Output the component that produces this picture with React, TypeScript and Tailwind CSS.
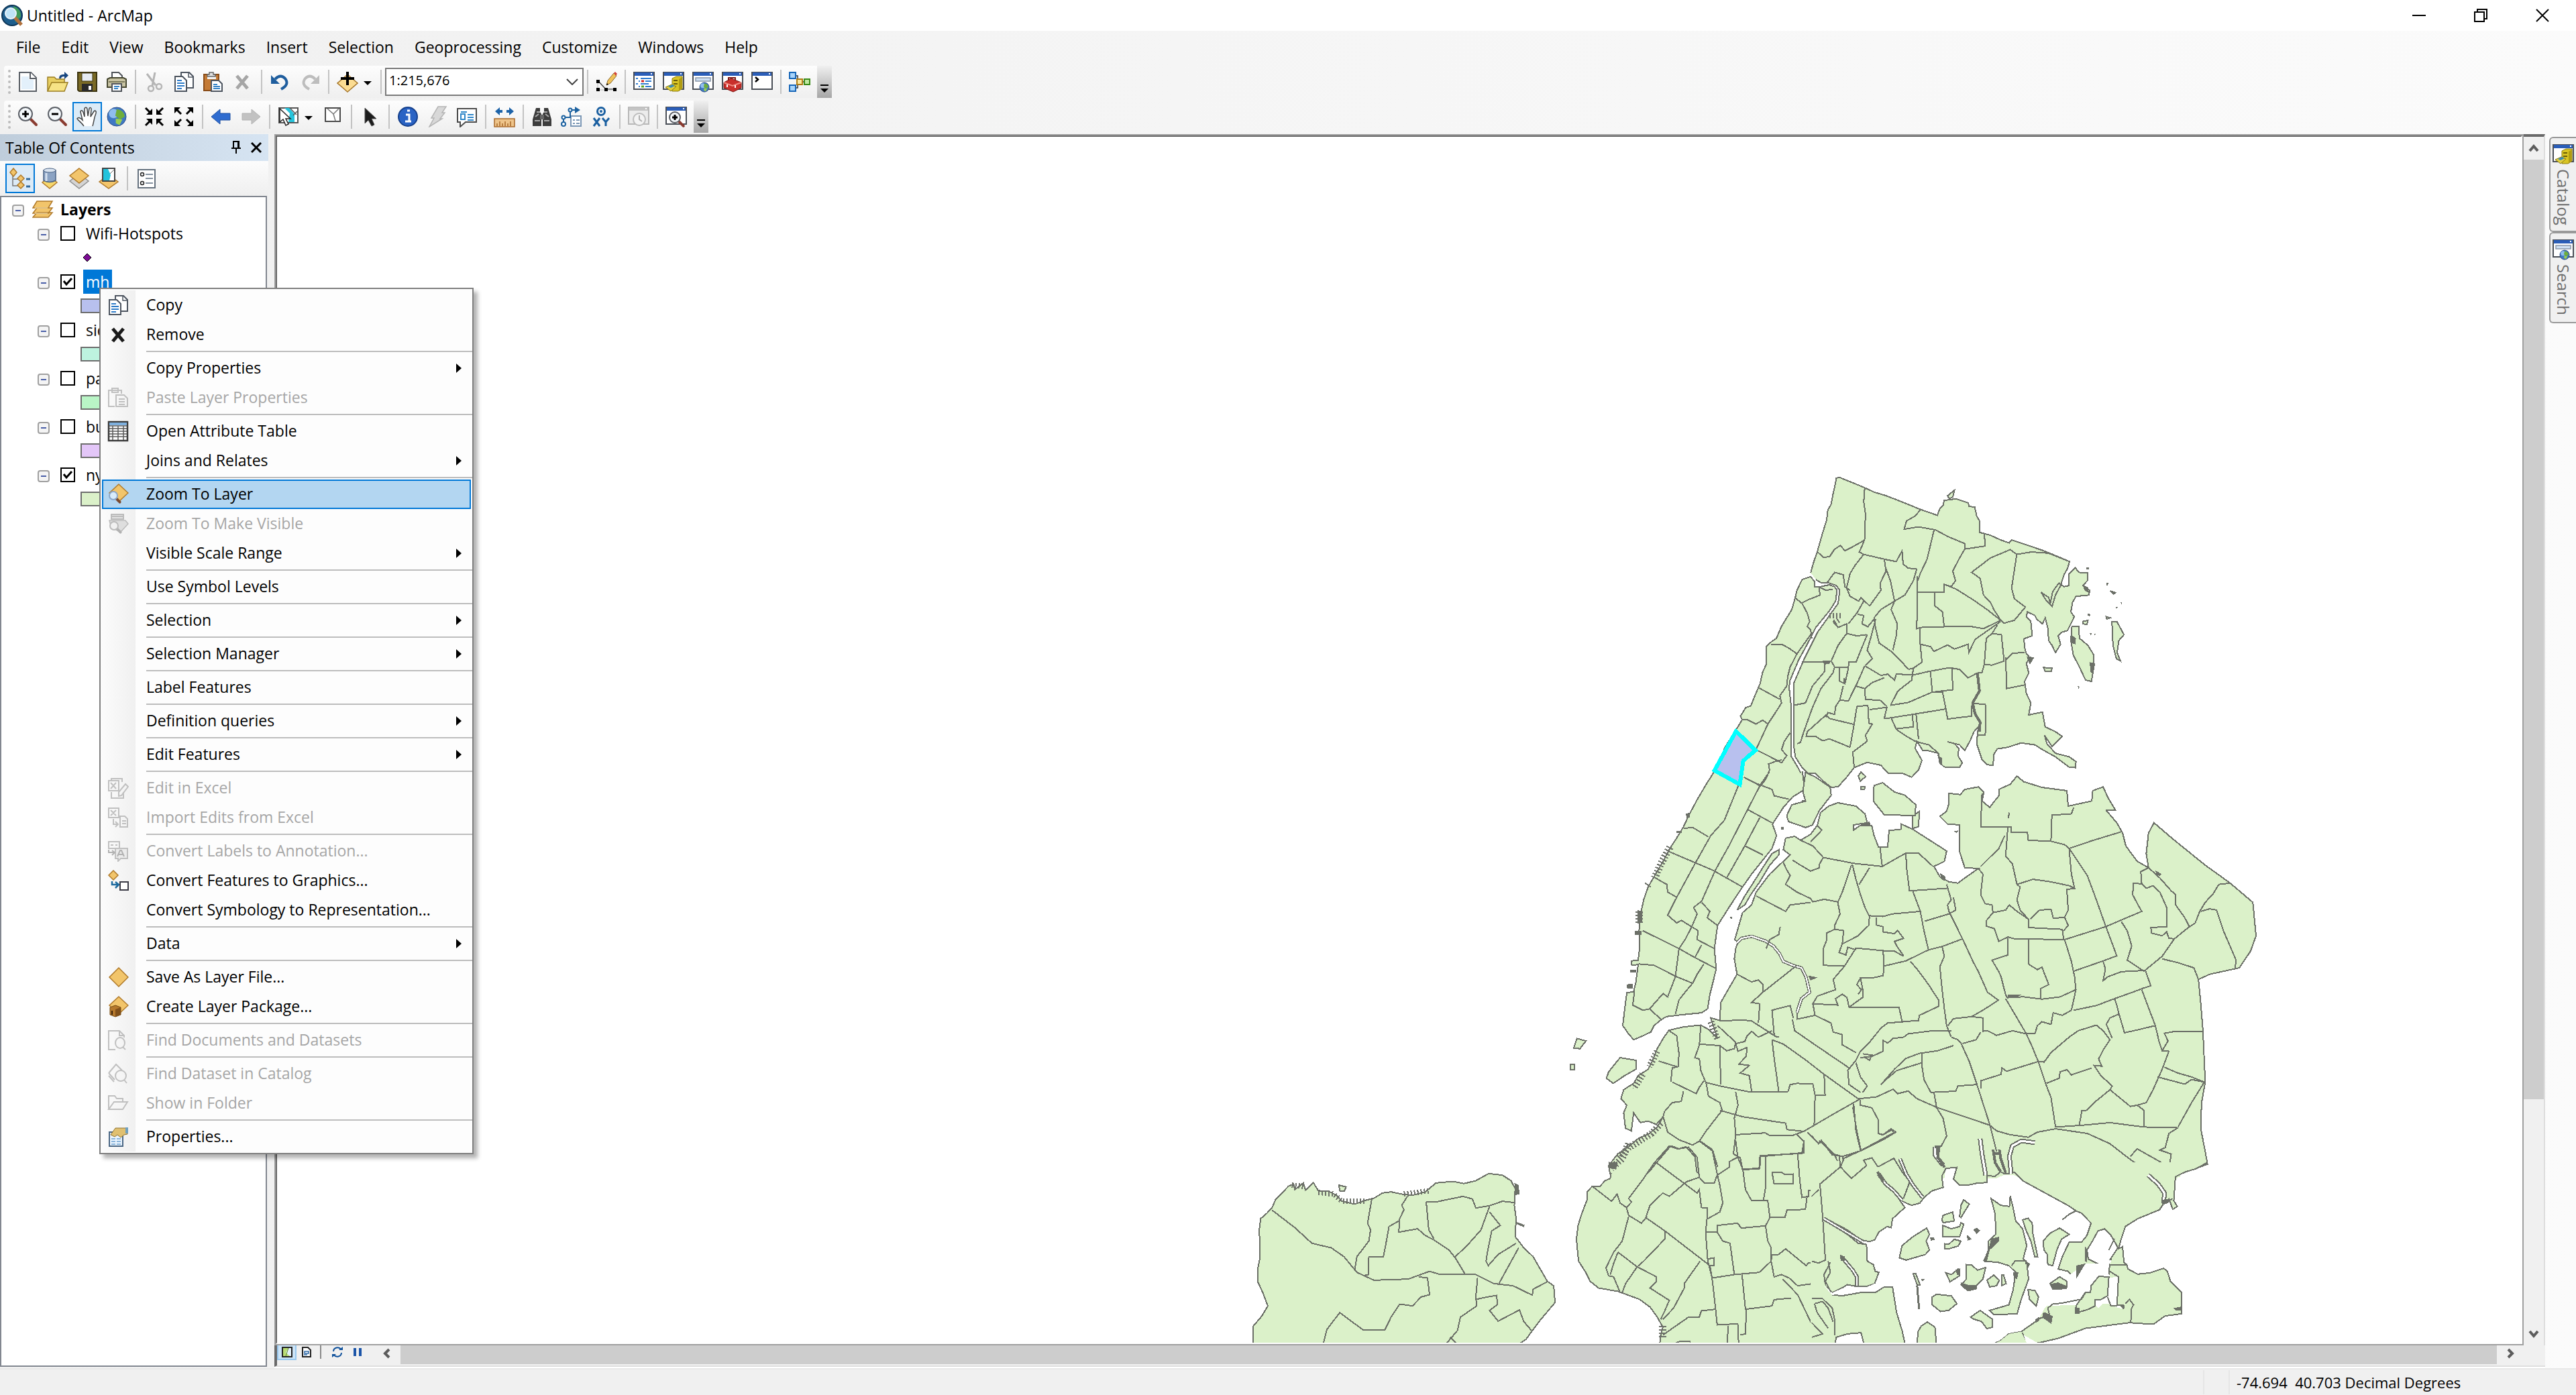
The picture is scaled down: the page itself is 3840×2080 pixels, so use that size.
import React from "react";

/* ------------------------------------------------------------------ */
/* Icon building blocks, all on a 32 x 32 grid                          */
/* ------------------------------------------------------------------ */

type Kids = { children?: React.ReactNode };

function Icon({ children, className = "size-8" }: Kids & { className?: string }) {
  return (
    <svg viewBox="0 0 32 32" className={`${className} shrink-0`} fill="none" aria-hidden="true">
      {children}
    </svg>
  );
}

const GOLD = "#f2c56b";
const GOLD_EDGE = "#b07a2a";

function Win({ children, gray = false }: Kids & { gray?: boolean }) {
  return (
    <>
      <rect x="1" y="2" width="30" height="25" fill={gray ? "#ececec" : "#fff"} stroke={gray ? "#b8b8b8" : "#4a4f57"} strokeWidth="2" />
      <rect x="2" y="2" width="28" height="5" fill={gray ? "#c4c4c4" : "#2a5db8"} />
      <rect x="26" y="3" width="2" height="2" fill="#fff" />
      {children}
    </>
  );
}

function Lens({ x, y, r, sign = "", handle = "#8a3b30", edge = "#5b5f66", glass = "#f4f8fb" }: { x: number; y: number; r: number; sign?: string; handle?: string; edge?: string; glass?: string }) {
  return (
    <>
      <path d={`M${x + r * 0.75},${y + r * 0.75} L${x + r * 1.6},${y + r * 1.6}`} stroke={handle} strokeWidth="4" strokeLinecap="round" />
      <circle cx={x} cy={y} r={r} fill={glass} stroke={edge} strokeWidth="2" />
      {sign !== "" && <path d={`M${x - r / 2},${y} H${x + r / 2}`} stroke="#000" strokeWidth="3" />}
      {sign === "+" && <path d={`M${x},${y - r / 2} V${y + r / 2}`} stroke="#000" strokeWidth="3" />}
    </>
  );
}

function Globe({ x, y, r }: { x: number; y: number; r: number }) {
  return (
    <>
      <circle cx={x} cy={y} r={r} fill="#3f78c4" stroke="#2b4f86" strokeWidth="1" />
      <circle cx={x - r / 3} cy={y - r / 3} r={r / 2} fill="#8fbdf0" />
      <path d={`M${x},${y - r * 0.8} q${r * 0.8},${r * 0.1} ${r * 0.85},${r * 0.8} l-${r * 0.5},${r * 0.3} l-${r * 0.5},-${r * 0.4} z`} fill="#6fae3c" />
      <path d={`M${x - r * 0.1},${y + r * 0.2} l${r * 0.7},${r * 0.1} l-${r * 0.3},${r * 0.6} l-${r * 0.4},-${r * 0.2} z`} fill="#9ccf52" />
    </>
  );
}

function Diamond({ x, y, w, h, fill = GOLD, edge = GOLD_EDGE }: { x: number; y: number; w: number; h: number; fill?: string; edge?: string }) {
  return <path d={`M${x},${y - h} L${x + w},${y} L${x},${y + h} L${x - w},${y} Z`} fill={fill} stroke={edge} strokeWidth="1.5" />;
}

function Pages({ line = "#2f7cc8", edge = "#4d5560" }: { line?: string; edge?: string }) {
  return (
    <>
      <path d="M12,2 h12 l6,6 v17 h-18 z" fill="#fff" stroke={edge} strokeWidth="2" />
      <path d="M23,2 v7 h7" stroke={edge} strokeWidth="1.5" />
      <path d="M3,8 h11 l6,6 v16 h-17 z" fill="#fff" stroke={edge} strokeWidth="2" />
      <path d="M6,14 h7 M6,18 h11 M6,22 h11 M6,26 h7" stroke={line} strokeWidth="2" />
    </>
  );
}

function Cabinet() {
  return (
    <>
      <path d="M14,11 l6,-3 h9 v18 l-6,4 h-9 z" fill="#d9c524" stroke="#8a7a10" strokeWidth="1" />
      <path d="M24,12 l5,-3 v17 l-5,4 z" fill="#b09c12" />
      <path d="M16,14 h6 M16,19 h6" stroke="#6b5d08" strokeWidth="2" />
      <path d="M4,24 l9,-4 l7,3 l-8,7 z" fill="#e2d040" stroke="#8a7a10" strokeWidth="1" />
      <path d="M8,23 l6,-3 l4,2 l-6,3 z" fill="#3a8bb8" />
    </>
  );
}

const icons: Record<string, React.ReactNode> = {
  new: (
    <>
      <path d="M3,2 h17 l8,8 v20 h-25 z" fill="#fff" stroke="#5a5f66" strokeWidth="2" />
      <path d="M6,8 h11 v5 h7 v14 h-18 z" fill="#e3f0fb" />
      <path d="M19,2 v9 h9" stroke="#5a5f66" strokeWidth="2" fill="#fff" />
    </>
  ),
  open: (
    <>
      <path d="M1,30 V9 h10 l3,3 h12 v7" fill="#e8cf62" stroke="#9a7d20" strokeWidth="1.5" />
      <path d="M1,30 l6,-13 h24 l-5,13 z" fill="#f6e385" stroke="#9a7d20" strokeWidth="1.5" />
      <path d="M18,11 q0,-6 6,-6 h2 v-4 l6,5.5 l-6,5.5 v-4 q-5,0 -5,3z" fill="#17457f" />
    </>
  ),
  save: (
    <>
      <path d="M2,2 h28 v28 h-26 l-2,-2 z" fill="#7a6a25" stroke="#3c3410" strokeWidth="2" />
      <rect x="8" y="3" width="16" height="12" fill="#e6ebf2" stroke="#3c3410" />
      <rect x="8" y="19" width="16" height="11" fill="#2a2a2a" />
      <rect x="18" y="22" width="4" height="6" fill="#fff" />
    </>
  ),
  print: (
    <>
      <path d="M9,13 V2 h10 l5,5 v6" fill="#fff" stroke="#50545a" strokeWidth="2" />
      <path d="M2,12 l4,-2 h20 l4,2 v12 h-28 z" fill="#c9c4a4" stroke="#45462f" strokeWidth="2" />
      <path d="M4,16 h24" stroke="#7c7b5c" strokeWidth="2" />
      <path d="M9,19 h14 v11 h-14 z" fill="#fff" stroke="#50545a" strokeWidth="2" />
      <path d="M12,23 h8 M12,26 h6" stroke="#3a86c8" strokeWidth="2" />
    </>
  ),
  cut: (
    <>
      <path d="M5,4 L18,21 M17,2 L13,22" stroke="#b5b5b5" strokeWidth="3" />
      <circle cx="11" cy="26" r="4" stroke="#b5b5b5" strokeWidth="2.5" />
      <circle cx="23" cy="23" r="4" stroke="#b5b5b5" strokeWidth="2.5" />
    </>
  ),
  copy: <Pages />,
  paste: (
    <>
      <rect x="2" y="5" width="22" height="24" fill="#c47a35" stroke="#8a4c18" strokeWidth="2" />
      <rect x="7" y="8" width="13" height="4" fill="#f4f4f4" />
      <path d="M7,8 v-3 h3 v-3 h6 v3 h3 v3 z" fill="#e2e2e2" stroke="#666" strokeWidth="1.5" />
      <path d="M13,14 h11 l5,5 v11 h-16 z" fill="#fff" stroke="#4d5560" strokeWidth="2" />
      <path d="M16,20 h6 M16,23 h10 M16,26 h10" stroke="#3a86c8" strokeWidth="2" />
    </>
  ),
  delete: <path d="M7,7 L23,26 M23,7 L7,26" stroke="#a6a6a6" strokeWidth="5" />,
  undo: (
    <>
      <path d="M8,12 q8,-8 15,-1 q7,9 -6,16" stroke="#1f5e9e" strokeWidth="4" />
      <path d="M2,6 v13 h13 z" fill="#1f5e9e" />
    </>
  ),
  redo: (
    <>
      <path d="M24,12 q-8,-8 -15,-1 q-7,9 6,16" stroke="#bdbdbd" strokeWidth="4" />
      <path d="M30,6 v13 h-13 z" fill="#bdbdbd" />
    </>
  ),
  add: (
    <>
      <Diamond x={16} y={18} w={15} h={13} fill="#fbdc92" edge="#a87a30" />
      <path d="M16,1 V21 M6,11 H26" stroke="#000" strokeWidth="4" />
    </>
  ),
  editor: (
    <>
      <path d="M3,14 L15,27 H29" stroke="#444" strokeWidth="1.5" />
      <path d="M3,15 V28 M3,28 H29" stroke="#bbb" />
      <path d="M1,13 h5 v5 h-5z M1,25 h5 v5 h-5z M13,25 h5 v5 h-5z M26,25 h5 v5 h-5z" fill="#000" />
      <path d="M16,21 l2,-7 l9,-11 l4,4 l-9,11 z" fill="#f0c25a" stroke="#8a6a30" strokeWidth="1" />
      <path d="M27,3 l2,-2 l3,3 l-2,3z" fill="#d2453a" />
      <path d="M16,21 l1,-3 l2,2z" fill="#000" />
    </>
  ),
  toc: (
    <Win>
      <path d="M4,11 h3 M11,11 h16 M8,15 h2 M18,15 h9 M4,19 h3 M11,19 h12 M8,23 h2 M18,23 h9" stroke="#2f7cd0" strokeWidth="2" />
      <path d="M12,15 h4" stroke="#d02020" strokeWidth="3" />
      <path d="M12,23 h4" stroke="#58a520" strokeWidth="3" />
    </Win>
  ),
  catalog: (
    <Win>
      <Cabinet />
    </Win>
  ),
  search: (
    <Win>
      <rect x="5" y="10" width="22" height="5" fill="#cfe0f4" stroke="#8a97a8" strokeWidth="1.5" />
      <Globe x={18} y={24} r={7} />
    </Win>
  ),
  toolbox: (
    <Win>
      <path d="M3,17 l11,-6 l15,6 v8 l-12,6 l-14,-6 z" fill="#c9302c" stroke="#7e1815" strokeWidth="1" />
      <path d="M3,17 l13,5 l13,-5" stroke="#f08a80" strokeWidth="2" />
      <path d="M10,14 v-4 h10 v4" stroke="#7e1815" strokeWidth="2" />
      <path d="M8,20 v4 M20,21 v4" stroke="#fff" strokeWidth="2" />
    </Win>
  ),
  python: (
    <Win>
      <path d="M6,9 L10,12.5 L6,16" stroke="#000" strokeWidth="2.5" />
    </Win>
  ),
  model: (
    <>
      <path d="M6,7 H13 V25 H6 M13,16 H28" stroke="#333" strokeWidth="1.5" />
      <rect x="1" y="2" width="9" height="9" fill="#a9d4fa" stroke="#1766b8" strokeWidth="2" />
      <rect x="1" y="21" width="9" height="9" fill="#a9d4fa" stroke="#1766b8" strokeWidth="2" />
      <rect x="12" y="12" width="8" height="8" fill="#fbe7a0" stroke="#b07d14" strokeWidth="2" />
      <rect x="23" y="12" width="8" height="8" fill="#bfe8a2" stroke="#3a8a18" strokeWidth="2" />
    </>
  ),
  zoomIn: <Lens x={12} y={12} r={10} sign="+" />,
  zoomOut: <Lens x={12} y={12} r={10} sign="-" />,
  pan: (
    <path
      d="M11,30 C8,25 4,23 1,19 C3,16 6,18 9,21 L6,9 C6,6 9,6 10,9 L12,16 L12,4 C13,1 16,2 16,5 L17,15 L19,4 C20,1 23,3 22,6 L21,16 L26,8 C28,6 30,8 29,11 C26,18 26,24 24,30"
      fill="#fff"
      stroke="#444"
      strokeWidth="1.5"
    />
  ),
  globe: <Globe x={16} y={16} r={14} />,
  fixedIn: (
    <>
      <path d="M3,3 L10,10 M29,3 L22,10 M3,29 L10,22 M29,29 L22,22" stroke="#000" strokeWidth="3" />
      <path d="M13,4 v9 h-9z M19,4 v9 h9z M13,28 v-9 h-9z M19,28 v-9 h9z" fill="#000" />
    </>
  ),
  fixedOut: (
    <>
      <path d="M6,6 L12,12 M26,6 L20,12 M6,26 L12,20 M26,26 L20,20" stroke="#000" strokeWidth="3" />
      <path d="M2,2 h9 l-9,9z M30,2 h-9 l9,9z M2,30 h9 l-9,-9z M30,30 h-9 l9,-9z" fill="#000" />
    </>
  ),
  back: <path d="M1,16 L14,5 V11 H29 V21 H14 V27 Z" fill="#2f6cd0" stroke="#1d4fa0" />,
  forward: <path d="M30,16 L17,5 V11 H3 V21 H17 V27 Z" fill="#c2c2c2" stroke="#b2b2b2" />,
  select: (
    <>
      <rect x="2" y="3" width="28" height="22" fill="#fff" stroke="#555" strokeWidth="2" />
      <path d="M10,3 l8,8 l-2,13 h9 v-12 l-8,-9 z" fill="#27c4dc" />
      <path d="M19,4 l9,9 M29,8 l-6,6" stroke="#555" strokeWidth="1.5" />
      <path d="M3,4 l0,20 l5,-4 l4,9 l4,-2 l-4,-8 h7 z" fill="#fff" stroke="#222" strokeWidth="1.5" />
    </>
  ),
  clear: (
    <>
      <rect x="5" y="3" width="22" height="20" fill="#fff" stroke="#4a4a4a" strokeWidth="2" />
      <path d="M8,4 L17,12 L20,22 M25,4 L19,10 L17,12" stroke="#777" strokeWidth="1.5" />
    </>
  ),
  arrow: <path d="M8,3 V26 L13,21 L18,30 L22,28 L18,19 H25 Z" fill="#1c1c1c" stroke="#555" />,
  info: (
    <>
      <circle cx="16" cy="16" r="14" fill="#2a63c4" stroke="#16408c" strokeWidth="2" />
      <path d="M13,13 h5 v10 h3 M12,23 h9 M15,7 h4" stroke="#fff" strokeWidth="3" />
    </>
  ),
  bolt: <path d="M17,1 h12 l-6,9 h4 l-7,9 h3 L4,31 l7,-13 h-4 z" fill="#d8d8d8" stroke="#b4b4b4" strokeWidth="1.5" />,
  popup: (
    <>
      <path d="M2,4 h28 v20 h-16 l-8,7 v-7 h-4 z" fill="#fff" stroke="#4d4d4d" strokeWidth="2" />
      <path d="M7,9 h9 M17,13 h9 M17,17 h9 M17,21 h9" stroke="#2f86c8" strokeWidth="2" />
      <rect x="7" y="12" width="6" height="8" stroke="#2f86c8" strokeWidth="2" />
    </>
  ),
  measure: (
    <>
      <path d="M2,8 L9,2 V6 H13 V10 H9 V14 Z M30,8 L23,2 V6 H19 V10 H23 V14 Z" fill="#1c62a8" />
      <rect x="1" y="19" width="30" height="12" fill="#eec48a" stroke="#a8682a" strokeWidth="1.5" />
      <path d="M5,30 v-4 M9,30 v-7 M13,30 v-4 M17,30 v-7 M21,30 v-4 M25,30 v-7" stroke="#a8682a" strokeWidth="1.5" />
    </>
  ),
  find: (
    <>
      <path d="M7,3 h6 v6 l2,3 v18 h-13 v-10 z" fill="#3c3c3c" />
      <path d="M25,3 h-6 v6 l-2,3 v18 h13 v-10 z" fill="#3c3c3c" />
      <path d="M5,22 h8 M19,22 h8 M8,9 h5 M19,9 h5 M6,16 l5,-4 M26,16 l-5,-4" stroke="#a8a8a8" strokeWidth="2" />
      <rect x="13" y="13" width="6" height="7" fill="#666" />
    </>
  ),
  route: (
    <>
      <rect x="15" y="15" width="15" height="15" fill="#fff" stroke="#7b97b5" strokeWidth="2" />
      <path d="M18,21 h3 M23,21 h5 M18,26 h3 M23,26 h5" stroke="#7b97b5" strokeWidth="2" />
      <path d="M4,27 V17 H14 V6 H22" stroke="#1d62a0" strokeWidth="2" />
      <path d="M21,1 L29,6 L21,11 Z" fill="#1d62a0" />
      <circle cx="4" cy="27" r="3" fill="#fff" stroke="#1d62a0" strokeWidth="2" />
      <circle cx="4" cy="17" r="2.5" fill="#fff" stroke="#1d62a0" strokeWidth="2" />
      <circle cx="14" cy="6" r="2.5" fill="#fff" stroke="#1d62a0" strokeWidth="2" />
    </>
  ),
  xy: (
    <>
      <circle cx="16" cy="8" r="5.5" stroke="#1a5fa0" strokeWidth="3" />
      <circle cx="16" cy="8" r="2" fill="#1a5fa0" />
      <path d="M5,18 L14,30 M14,18 L5,30 M18,18 L23,24 L28,18 M23,24 V30" stroke="#1a5fa0" strokeWidth="3" />
    </>
  ),
  time: (
    <Win gray>
      <circle cx="17" cy="20" r="9" fill="#f4f4f4" stroke="#bcbcbc" strokeWidth="2" />
      <path d="M17,14 V20 L21,23" stroke="#b0b0b0" strokeWidth="2" />
    </Win>
  ),
  viewer: (
    <Win>
      <Lens x={14} y={17} r={8} sign="+" />
    </Win>
  ),
  byDrawing: (
    <>
      <path d="M5,12 V27 H15 M5,17 H15" stroke="#777" strokeWidth="1.5" />
      <Diamond x={6} y={7} w={5} h={6} />
      <Diamond x={17} y={16} w={5} h={5} />
      <Diamond x={17} y={26} w={5} h={5} />
      <path d="M25,17 h6 M25,28 h6" stroke="#2f6a9e" strokeWidth="3" />
    </>
  ),
  bySource: (
    <>
      <Diamond x={16} y={22} w={11} h={9} fill="#f6d76c" />
      <path d="M7,4 q9,-5 18,0 v15 q-9,5 -18,0 z" fill="#8ba3c4" stroke="#4b6384" strokeWidth="1.5" />
      <ellipse cx="16" cy="4" rx="9" ry="3" fill="#dbe5f1" stroke="#4b6384" strokeWidth="1" />
      <path d="M11,8 v12" stroke="#d5e1f0" strokeWidth="3" />
    </>
  ),
  byVisibility: (
    <>
      <Diamond x={16} y={20} w={14} h={11} fill="#d4d4d4" edge="#909090" />
      <Diamond x={16} y={12} w={14} h={11} />
    </>
  ),
  bySelection: (
    <>
      <Diamond x={16} y={21} w={14} h={10} />
      <rect x="7" y="1" width="18" height="19" fill="#fff" stroke="#444" strokeWidth="2" />
      <path d="M8,2 h7 l4,9 l-2,8 h-9 z" fill="#22c3dc" />
      <path d="M18,9 l6,-6" stroke="#666" />
    </>
  ),
  options: (
    <>
      <rect x="4" y="3" width="25" height="27" fill="#fff" stroke="#66727f" strokeWidth="2" />
      <circle cx="10" cy="10" r="2.5" stroke="#222" strokeWidth="1.5" />
      <circle cx="10" cy="23" r="2.5" stroke="#222" strokeWidth="1.5" />
      <path d="M15,10 h11 M15,16 h11 M15,23 h11" stroke="#8592a0" strokeWidth="2" />
    </>
  ),
  layers: (
    <>
      <path d="M1,28 l6,-7 h23 l-6,7 z M1,22 l6,-8 h23 l-6,8 z M1,14 l6,-10 h23 l-6,10 z" fill={GOLD} stroke={GOLD_EDGE} strokeWidth="1.5" />
      <path d="M4,14 h19 M4,22 h19" stroke="#fff3d0" />
    </>
  ),
  remove: <path d="M8,7 L24,26 M24,7 L8,26" stroke="#1a1a1a" strokeWidth="5" />,
  pasteGray: (
    <>
      <path d="M21,10 V5 h-19 v24 h9 M7,5 v-3 h9 v6 h-9 z" stroke="#c0c0c0" strokeWidth="2" />
      <path d="M13,12 h12 l5,5 v12 h-17 z M17,18 h9 M17,22 h9 M17,26 h9" stroke="#c0c0c0" strokeWidth="2" />
    </>
  ),
  table: (
    <>
      <rect x="2" y="2" width="28" height="28" fill="#fff" stroke="#3b3b3b" strokeWidth="2.5" />
      <rect x="3" y="3" width="26" height="4" fill="#7fb0de" />
      <path d="M3,8 h26 M3,12 h26 M3,16 h26 M3,20 h26 M3,24 h26 M8,8 v21 M16,8 v21 M24,8 v21" stroke="#5a5a5a" strokeWidth="1.5" />
    </>
  ),
  zoomLayer: (
    <>
      <Diamond x={17} y={14} w={14} h={13} />
      <Lens x={9} y={18} r={6} edge="#8aa5c8" glass="#d8ebfb" handle="#7a4a30" />
    </>
  ),
  zoomVisible: (
    <>
      <path d="M6,2 h18 v7 h-18z M6,5 h18" fill="#e2e2e2" stroke="#bcbcbc" strokeWidth="2" />
      <path d="M3,11 h24 l4,5 l-11,12 l-14,-6 z" fill="#dedede" stroke="#bcbcbc" strokeWidth="1.5" />
      <Lens x={10} y={19} r={6} edge="#bcbcbc" glass="#f1f1f1" handle="#b2b2b2" />
    </>
  ),
  editExcel: (
    <path d="M6,5 V2 h16 v5 M2,5 h15 v15 h-15z M5,8 l8,9 M13,8 l-8,9 M6,22 v9 h18 v-9 M17,28 v-6 l10,-12 l4,4 l-10,13z" stroke="#c0c0c0" strokeWidth="2" />
  ),
  importExcel: (
    <path d="M2,2 h15 v14 h-15z M5,5 l8,8 M13,5 l-8,8 M9,18 v8 h6 M12,22 l4,4 l-4,4 M19,14 h7 l4,4 v12 h-11z M22,21 h6 M22,25 h6" stroke="#c0c0c0" strokeWidth="2" />
  ),
  annotation: (
    <>
      <path d="M2,2 h16 v10 h-16z M5,7 h4 M12,7 h3" stroke="#c0c0c0" strokeWidth="2" />
      <path d="M12,12 h18 v15 h-10 l-4,4 v-4 h-4z" fill="#ebebeb" stroke="#c0c0c0" strokeWidth="2" />
      <path d="M2,14 v4 h8 M7,15 l4,3 l-4,4 M15,24 l4,-9 h2 l4,9 M17,21 h7" stroke="#b2b2b2" strokeWidth="2" />
    </>
  ),
  toGraphics: (
    <>
      <Diamond x={9} y={8} w={7} h={7} />
      <path d="M7,17 v5 h8 M12,18 l5,4 l-5,5" stroke="#1c6a9e" strokeWidth="2.5" />
      <rect x="19" y="18" width="12" height="12" fill="#fff" stroke="#3b3b46" strokeWidth="2" />
    </>
  ),
  diamond: <Diamond x={17} y={16} w={14} h={14} />,
  package: (
    <>
      <Diamond x={17} y={14} w={14} h={13} />
      <path d="M4,17 l8,-3 l8,3 v11 l-8,3 l-8,-3 z" fill="#b5782c" stroke="#74480f" />
      <path d="M12,20 l8,-3 v11 l-8,3z" fill="#80501a" />
      <path d="M7,22 v6" stroke="#3b230a" strokeWidth="2" />
    </>
  ),
  findDoc: (
    <>
      <path d="M12,30 H2 V2 h16 l7,7 v3 M18,2 v7 h7" stroke="#c0c0c0" strokeWidth="2" />
      <ellipse cx="19" cy="20" rx="7" ry="8" stroke="#c0c0c0" strokeWidth="2" />
      <path d="M23,26 l4,4" stroke="#c0c0c0" strokeWidth="2" />
    </>
  ),
  findData: (
    <>
      <path d="M2,15 L13,2 L22,11 M2,15 l9,10 M2,19 l8,9" stroke="#c0c0c0" strokeWidth="2" />
      <ellipse cx="20" cy="19" rx="8" ry="8" stroke="#c0c0c0" strokeWidth="2" />
      <path d="M25,25 l4,5" stroke="#c0c0c0" strokeWidth="2" />
    </>
  ),
  folder: <path d="M2,25 V5 h9 l3,4 h9 v5 M2,25 l8,-11 h20 l-7,11 z" stroke="#c0c0c0" strokeWidth="2" />,
  properties: (
    <>
      <rect x="3" y="9" width="20" height="21" fill="#eaf4fd" stroke="#4b6784" strokeWidth="2" />
      <path d="M6,19 h6 M14,19 h6 M6,23 h6 M14,23 h6 M6,27 h6 M14,27 h6" stroke="#8cb6dc" strokeWidth="2" />
      <path d="M5,13 l7,-10 h18 v9 l-5,1 l-5,4 l-5,-4 l-4,3 z" fill="#e0c070" stroke="#8f7330" strokeWidth="1" />
      <path d="M27,2 h4 v9 h-4z" fill="#6fa0c0" />
    </>
  ),
  app: (
    <>
      <circle cx="16" cy="16" r="15" fill="#1d5d8c" stroke="#0e3657" strokeWidth="2" />
      <path d="M18,2 q12,4 11,16 l-8,8 z" fill="#3f9a5c" />
      <path d="M20,19 L30,30" stroke="#b0703c" strokeWidth="5" />
      <circle cx="14" cy="13" r="8" fill="#bfe3f7" stroke="#eaf4fa" strokeWidth="2" />
    </>
  ),
};

/* ------------------------------------------------------------------ */
/* Toolbars                                                            */
/* ------------------------------------------------------------------ */

function Tool({ name, label, active = false, menu = false }: { name: string; label: string; active?: boolean; menu?: boolean }) {
  return (
    <button
      type="button"
      aria-label={label}
      className={`flex h-11 items-center ${menu ? "w-[66px] gap-2 pl-1.5" : "w-11 justify-center"} ${active ? "border-2 border-[#0078d7] bg-[#dcebf7]" : ""}`}
    >
      <Icon>{icons[name]}</Icon>
      {menu && <span className="mt-1 border-x-[6px] border-t-[6px] border-x-transparent border-t-black" />}
    </button>
  );
}

function Sep() {
  return (
    <div className="flex w-3 justify-center">
      <span className="h-9 w-0.5 bg-[#c3c3c3]" />
    </div>
  );
}

function Grip() {
  return <div className="mr-1 ml-1.5 h-9 w-1 border-l-4 border-dotted border-[#bcbcbc]" />;
}

function Overflow() {
  return (
    <button type="button" aria-label="Toolbar Options" className="ml-1 flex h-full w-[22px] flex-col items-center justify-end gap-1 bg-linear-to-b from-[#f0f0f0] to-[#a6a6a6] pb-2">
      <span className="h-0.5 w-3 bg-black" />
      <span className="border-x-[6px] border-t-[6px] border-x-transparent border-t-black" />
    </button>
  );
}

const barClass = "ml-1.5 flex h-12 w-fit items-center rounded-sm bg-linear-to-b from-[#fdfdfd] to-[#efefef]";

function StandardBar() {
  return (
    <div role="toolbar" aria-label="Standard" className={barClass}>
      <Grip />
      <Tool name="new" label="New" />
      <Tool name="open" label="Open" />
      <Tool name="save" label="Save" />
      <Tool name="print" label="Print" />
      <Sep />
      <Tool name="cut" label="Cut" />
      <Tool name="copy" label="Copy" />
      <Tool name="paste" label="Paste" />
      <Tool name="delete" label="Delete" />
      <Sep />
      <Tool name="undo" label="Undo" />
      <Tool name="redo" label="Redo" />
      <Sep />
      <Tool name="add" label="Add Data" menu />
      <Sep />
      <div className="relative">
        <select aria-label="Map scale" className="block h-[42px] w-[296px] appearance-none border-2 border-[#7a7a7a] bg-white pb-1 pl-1 text-[20px] leading-none text-black">
          <option>1:215,676</option>
        </select>
        <svg viewBox="0 0 18 10" className="pointer-events-none absolute top-4 right-2 h-2.5 w-[18px]" fill="none" aria-hidden="true">
          <path d="M1,1 L9,9 L17,1" stroke="#444" strokeWidth="2" />
        </svg>
      </div>
      <Sep />
      <Tool name="editor" label="Editor Toolbar" />
      <Sep />
      <Tool name="toc" label="Table Of Contents" />
      <Tool name="catalog" label="Catalog" />
      <Tool name="search" label="Search" />
      <Tool name="toolbox" label="ArcToolbox" />
      <Tool name="python" label="Python" />
      <Sep />
      <Tool name="model" label="ModelBuilder" />
      <Overflow />
    </div>
  );
}

function ToolsBar() {
  return (
    <div role="toolbar" aria-label="Tools" className={barClass}>
      <Grip />
      <Tool name="zoomIn" label="Zoom In" />
      <Tool name="zoomOut" label="Zoom Out" />
      <Tool name="pan" label="Pan" active />
      <Tool name="globe" label="Full Extent" />
      <Sep />
      <Tool name="fixedIn" label="Fixed Zoom In" />
      <Tool name="fixedOut" label="Fixed Zoom Out" />
      <Sep />
      <Tool name="back" label="Go Back" />
      <Tool name="forward" label="Go Forward" />
      <Sep />
      <Tool name="select" label="Select Features" menu />
      <Tool name="clear" label="Clear Selected Features" />
      <Sep />
      <Tool name="arrow" label="Select Elements" />
      <Sep />
      <Tool name="info" label="Identify" />
      <Tool name="bolt" label="Hyperlink" />
      <Tool name="popup" label="HTML Popup" />
      <Sep />
      <Tool name="measure" label="Measure" />
      <Sep />
      <Tool name="find" label="Find" />
      <Tool name="route" label="Find Route" />
      <Tool name="xy" label="Go To XY" />
      <Sep />
      <Tool name="time" label="Time Slider" />
      <Sep />
      <Tool name="viewer" label="Create Viewer Window" />
      <Overflow />
    </div>
  );
}

/* ------------------------------------------------------------------ */
/* Table of contents                                                   */
/* ------------------------------------------------------------------ */

type Layer = { name: string; checked: boolean; color?: string; selected?: boolean };

const layers: Layer[] = [
  { name: "Wifi-Hotspots", checked: false },
  { name: "mh", checked: true, color: "bg-[#b8c0ee]", selected: true },
  { name: "sidewalk", checked: false, color: "bg-[#bdf3df]" },
  { name: "parks", checked: false, color: "bg-[#b9f5c6]" },
  { name: "buildings", checked: false, color: "bg-[#e3c6f8]" },
  { name: "nyc", checked: true, color: "bg-[#dbf1c9]" },
];

function Expander() {
  return (
    <button type="button" aria-label="Collapse" className="mt-1 flex size-[18px] items-center justify-center rounded-sm border-2 border-[#a0a0a0] bg-[#f4f4f4]">
      <span className="h-0.5 w-2 bg-[#4a5fa8]" />
    </button>
  );
}

function LayerRow({ layer }: { layer: Layer }) {
  return (
    <li>
      <div className="flex h-9 items-center pl-[54px]">
        <Expander />
        <label className="flex h-9 items-center">
          <span className="relative ml-4 flex size-[22px]">
            <input type="checkbox" defaultChecked={layer.checked} className="peer size-[22px] appearance-none border-2 border-black bg-white" />
            <svg viewBox="0 0 22 22" className="pointer-events-none absolute inset-0 hidden peer-checked:block" fill="none" aria-hidden="true">
              <path d="M5,10 L9,15 L17,6" stroke="#000" strokeWidth="3" />
            </svg>
          </span>
          <span className={`ml-3 flex h-9 items-center px-1 ${layer.selected ? "bg-[#0078d7] text-white" : ""}`}>{layer.name}</span>
        </label>
      </div>
      <div className="flex h-9 items-center pl-[118px]">
        {layer.color ? (
          <span className={`h-[22px] w-12 border-2 border-[#6e6e6e] ${layer.color}`} />
        ) : (
          <svg viewBox="0 0 12 12" className="ml-1 size-3" aria-hidden="true">
            <path d="M6,0 L12,6 L6,12 L0,6 Z" fill="#7d0c95" stroke="#000" />
          </svg>
        )}
      </div>
    </li>
  );
}

function Contents() {
  return (
    <aside className="flex w-[400px] shrink-0 flex-col">
      <header className="flex h-10 items-center bg-linear-to-r from-[#bfcddb] to-[#d6e4f2] pr-1 pl-2">
        <h2 className="grow">Table Of Contents</h2>
        <button type="button" aria-label="Auto Hide" className="flex w-8 justify-center">
          <svg viewBox="0 0 16 20" className="h-5 w-4" fill="none" aria-hidden="true">
            <path d="M4,1 H12 V11 H4 Z M1,11 H15 M8,11 V19 M11,1 V11" stroke="#000" strokeWidth="2" />
          </svg>
        </button>
        <button type="button" aria-label="Close" className="flex w-7 justify-center">
          <svg viewBox="0 0 16 16" className="size-4" fill="none" aria-hidden="true">
            <path d="M1,1 L15,15 M15,1 L1,15" stroke="#000" strokeWidth="3" />
          </svg>
        </button>
      </header>
      <div className="flex h-[52px] items-center bg-linear-to-b from-[#fcfcfc] to-[#efefef] pl-2">
        <Tool name="byDrawing" label="List By Drawing Order" active />
        <Tool name="bySource" label="List By Source" />
        <Tool name="byVisibility" label="List By Visibility" />
        <Tool name="bySelection" label="List By Selection" />
        <Sep />
        <Tool name="options" label="Options" />
      </div>
      <div className="mr-0.5 mb-0.5 grow border-2 border-[#828790] bg-white">
        <div className="flex h-9 items-center pl-4">
          <Expander />
          <Icon className="ml-3 size-8">{icons.layers}</Icon>
          <span className="ml-2.5 font-bold">Layers</span>
        </div>
        <ul>
          {layers.map((l) => (
            <LayerRow key={l.name} layer={l} />
          ))}
        </ul>
      </div>
    </aside>
  );
}

/* ------------------------------------------------------------------ */
/* Context menu                                                        */
/* ------------------------------------------------------------------ */

type Item = { label: string; icon?: string; sub?: boolean; off?: boolean; hot?: boolean };

const groups: Item[][] = [
  [
    { label: "Copy", icon: "copy" },
    { label: "Remove", icon: "remove" },
  ],
  [
    { label: "Copy Properties", sub: true },
    { label: "Paste Layer Properties", icon: "pasteGray", off: true },
  ],
  [
    { label: "Open Attribute Table", icon: "table" },
    { label: "Joins and Relates", sub: true },
  ],
  [
    { label: "Zoom To Layer", icon: "zoomLayer", hot: true },
    { label: "Zoom To Make Visible", icon: "zoomVisible", off: true },
    { label: "Visible Scale Range", sub: true },
  ],
  [{ label: "Use Symbol Levels" }],
  [{ label: "Selection", sub: true }],
  [{ label: "Selection Manager", sub: true }],
  [{ label: "Label Features" }],
  [{ label: "Definition queries", sub: true }],
  [{ label: "Edit Features", sub: true }],
  [
    { label: "Edit in Excel", icon: "editExcel", off: true },
    { label: "Import Edits from Excel", icon: "importExcel", off: true },
  ],
  [
    { label: "Convert Labels to Annotation...", icon: "annotation", off: true },
    { label: "Convert Features to Graphics...", icon: "toGraphics" },
    { label: "Convert Symbology to Representation..." },
  ],
  [{ label: "Data", sub: true }],
  [
    { label: "Save As Layer File...", icon: "diamond" },
    { label: "Create Layer Package...", icon: "package" },
  ],
  [{ label: "Find Documents and Datasets", icon: "findDoc", off: true }],
  [
    { label: "Find Dataset in Catalog", icon: "findData", off: true },
    { label: "Show in Folder", icon: "folder", off: true },
  ],
  [{ label: "Properties...", icon: "properties" }],
];

function ContextMenu() {
  return (
    <div role="menu" className="absolute top-[429px] left-[148px] w-[558px] border-2 border-[#808080] bg-[#fdfdfd] py-0.5 shadow-[6px_6px_6px_rgba(0,0,0,0.3)]">
      <div className="bg-linear-to-r from-[#fcfcfc] to-[#f0f0f0] bg-[length:52px_100%] bg-no-repeat">
        {groups.map((g, i) => (
          <React.Fragment key={g[0].label}>
            {i > 0 && (
              <div role="separator" className="flex h-1.5 items-center pl-[68px]">
                <span className="h-0.5 grow bg-[#bdbdbd]" />
              </div>
            )}
            <div className="px-0.5">
              {g.map((it) => (
                <button
                  key={it.label}
                  type="button"
                  role="menuitem"
                  disabled={it.off}
                  className={`flex h-11 w-full items-center text-left ${it.off ? "text-[#a6a6a6]" : "text-black"} ${it.hot ? "bg-[#b3d6f1] outline-2 -outline-offset-2 outline-[#0078d7]" : ""}`}
                >
                  <span className="flex w-[66px] shrink-0 pl-2">{it.icon && <Icon>{icons[it.icon]}</Icon>}</span>
                  <span className="grow pb-0.5">{it.label}</span>
                  {it.sub && <span className="mr-3.5 border-y-[7px] border-l-8 border-y-transparent border-l-black" />}
                </button>
              ))}
            </div>
          </React.Fragment>
        ))}
      </div>
    </div>
  );
}

/* ------------------------------------------------------------------ */
/* Map                                                                 */
/* ------------------------------------------------------------------ */

const LAND = "#dbf1c9";
const EDGE = "#6c7068";
const lines = (list: string[]) => list.map((p) => "M" + p).join(" ");

function Sheet({ at, children }: Kids & { at: string }) {
  return <g transform={at}>{children}</g>;
}

/* seam closes the fill without being outlined */
function Shore({ coast, seam = "" }: { coast: string; seam?: string }) {
  return (
    <>
      <path d={`M${coast} ${seam} Z`} fill={LAND} />
      <path d={`M${coast}`} stroke={EDGE} strokeWidth="2" vectorEffect="non-scaling-stroke" />
    </>
  );
}

function Islands({ list }: { list: string[] }) {
  return <path d={list.map((p) => "M" + p + "Z").join(" ")} fill={LAND} stroke={EDGE} strokeWidth="2" vectorEffect="non-scaling-stroke" />;
}

function Borders({ list }: { list: string[] }) {
  return <path d={lines(list)} stroke={EDGE} strokeWidth="2" vectorEffect="non-scaling-stroke" />;
}

function Creeks({ list, wide = 9, core = 5 }: { list: string[]; wide?: number; core?: number }) {
  return (
    <>
      <path d={lines(list)} stroke={EDGE} strokeWidth={wide} vectorEffect="non-scaling-stroke" />
      <path d={lines(list)} stroke="#fff" strokeWidth={core} vectorEffect="non-scaling-stroke" />
    </>
  );
}

function Piers({ list, wide = 9 }: { list: string[]; wide?: number }) {
  return <path d={lines(list)} stroke={EDGE} strokeWidth={wide} strokeDasharray="2 3" vectorEffect="non-scaling-stroke" />;
}

function Blots({ list }: { list: string[] }) {
  return <path d={list.map((p) => "M" + p + "Z").join(" ")} fill={EDGE} />;
}

function Queens() {
  return (
    <Sheet at="translate(2340 1150) scale(0.67602 0.38265)">
      <Shore coast="318,0 300,50 280,110 262,170 250,215 240,245 220,300 205,350 185,410 172,450 162,500 155,560 152,620 153,690 150,735 135,738 136,755 150,752 145,820 140,858 125,862 120,930 116,990 128,1020 140,1045 160,1030 178,1015 185,990 200,968 212,955 245,948 290,940 303,925 308,870 315,820 322,770 318,690 325,600 350,530 380,450 400,400 445,300 455,250 446,205 470,140 490,100 517,70 512,0" />
      <Borders
        list={[
          "372,50 340,190 310,250 275,360 235,490 215,560 235,590 245,580 268,605 255,650 240,690 232,800",
          "250,222 270,218 305,255",
          "222,315 275,355 315,385 380,450",
          "440,0 420,50 385,170 350,290 320,385 290,505 272,530 280,555 268,605",
          "385,25 415,50 445,70 450,95 482,108",
          "393,150 445,200",
          "418,180 400,240 385,290 345,415",
          "385,290 425,325",
          "188,415 213,440 215,470 235,490",
          "160,620 240,690 275,725 322,768",
          "268,605 282,620 280,655 318,690",
          "290,675 275,725",
          "290,510 308,545 302,570 325,600",
          "152,750 185,755 235,800 270,825 280,790 295,750",
          "142,855 138,910 160,930 175,925 205,865 215,878 232,800",
          "270,825 258,850 240,890 232,945",
          "175,925 200,965",
        ]}
      />
      <Piers list={["220,295 200,360 186,415", "172,440 168,450", "152,545 152,590"]} wide={11} />
      <Blots list={["148,540 160,545 158,590 148,592", "142,622 158,622 158,636 142,636", "234,232 246,230 246,240 234,240", "255,165 264,160 264,180 257,182", "124,830 138,826 138,845 126,845", "132,774 146,772 146,782 132,782"]} />

      <Shore
        coast="88,1568 85,1535 105,1490 130,1460 150,1430 175,1410 192,1385 205,1345 190,1375 172,1362 155,1368 140,1330 135,1400 122,1390 118,1330 125,1300 112,1275 118,1240 140,1215 150,1185 172,1160 182,1125 192,1080 205,1040 218,1008 250,995 288,988 305,1005 325,1040 310,960 330,970 332,900 345,860 368,790 362,730 365,690 370,665 363,655 372,600 380,550 400,520 410,470 440,400 470,350 485,325 470,305 475,260 495,253 508,268 530,245 545,210 552,160 570,135 590,122 630,135 650,165 655,200 625,208 625,228 640,210 665,212 670,250 680,295 700,295 703,230 730,225 730,205 755,225 830,310 825,350 802,370 815,410 835,430 855,435 870,415 900,378 870,375 858,310 858,208 832,205 815,175 830,155 835,125 835,85 860,90 870,70 900,60 912,80 908,115 925,140 938,110 945,95 945,70 970,50 985,18 1000,40 1040,62 1095,75 1098,135 1150,115 1152,75 1175,60 1185,100 1202,150 1182,152 1205,200 1218,240 1225,290 1250,350 1275,375 1270,320 1275,240 1287,200 1330,265 1400,365 1455,435 1505,510 1512,640 1500,700 1475,765 1410,790 1385,810 1390,900 1395,1010 1400,1210 1392,1290 1390,1390 1400,1480 1405,1530 1345,1568"
        seam="L1345,1580 L88,1580"
      />
      <Creeks list={["368,668 378,650 400,642 430,660 448,680 462,710 470,740 495,758 510,765 520,800 528,860 510,885 500,940"]} wide={5} core={2} />
      <Borders
        list={[
          "432,690 440,655 460,635 463,605",
          "508,268 535,290 558,335 550,360 550,375 530,388 505,362 490,345",
          "545,210 555,228 530,275",
          "558,335 625,358 688,370 740,318 768,318 800,370",
          "688,370 683,295",
          "470,355 478,385 485,405 475,440 500,470 530,495 535,508 560,498 590,508",
          "410,485 475,545 485,520 530,510",
          "620,365 600,470 590,510 595,555 583,600 583,615 565,630 565,660 558,690 558,755 605,758",
          "583,615 603,620 600,670 593,705 608,715 612,685 630,695",
          "605,758 580,810 585,850 545,875",
          "622,362 630,420 640,480 650,530 660,565 658,600 635,640 600,672",
          "660,375 648,410 637,440",
          "740,318 742,380 748,465 832,455",
          "755,465 772,545 780,620 790,695",
          "660,562 690,565 710,555 772,545",
          "675,568 675,598 690,605 690,625 715,632 722,620 735,650 715,662 720,680 735,718",
          "865,652 820,682 790,695 740,738 692,758 690,698 630,688 605,758",
          "690,698 715,700 735,720",
          "692,758 690,795 665,805 640,805 645,850 645,880 615,918",
          "545,875 535,905 590,910 585,885 600,868 610,880 615,918 725,918 732,975 700,980",
          "732,975 768,970 770,950 812,915 812,890 790,830 765,770 750,740",
          "830,440 840,500 832,520 835,545 865,652 888,740 900,780 920,860 945,892",
          "845,490 850,540 835,555 782,583",
          "820,682 825,720 815,760 820,850 825,925 830,990 840,1035",
          "900,378 910,400 905,480 915,515 930,520 932,550 960,540 968,520 985,545 1010,575 1010,608 1085,615 1088,655",
          "932,550 918,580 918,603 935,612 945,662 965,645 980,652 1090,655",
          "958,250 945,300 905,370",
          "908,85 905,215 972,215 972,238 1008,238 1010,268 1060,272 1090,285 1100,300 1150,270 1215,235",
          "1060,272 1062,170 1105,165 1110,140",
          "965,215 960,330 975,360 985,440 992,450 985,500 992,540 1010,575",
          "985,440 1020,420 1060,430 1100,445 1112,455 1105,400 1100,300",
          "1112,455 1095,460 1098,540 1090,568 1065,572 1060,537 1035,540 1015,575",
          "1090,568 1098,600 1088,620",
          "968,160 966,182",
          "1100,300 1140,405 1160,500 1180,600 1205,718 1175,738 1110,778",
          "1090,655 1180,605 1260,545 1252,520 1240,480 1242,435 1260,438 1258,390 1275,375",
          "1260,438 1270,455 1285,445 1300,470 1315,530 1315,605 1280,608 1282,630 1305,640 1315,625 1320,650 1332,652",
          "1275,375 1300,415 1325,465 1335,480 1335,520 1355,570 1365,605",
          "1455,435 1430,440 1418,475 1400,510 1388,545 1378,590 1360,612 1332,652 1305,720 1265,778",
          "1215,585 1228,620 1238,680 1228,735 1265,778",
          "1305,730 1340,745 1375,765 1385,810",
          "1390,545 1410,535 1425,540 1440,620 1468,735 1466,765",
          "1090,655 1105,740 1112,800 1115,850 1105,930",
          "965,650 965,715 930,735 945,780 950,800 960,870 965,885",
          "1010,655 1010,750 1030,772 1040,762 1055,830 1038,845 1038,885",
          "965,880 1000,878 1040,887 1080,878 1115,850",
          "1110,930 1160,912 1200,885 1240,860 1262,845 1280,835 1268,775 1215,780 1185,800 1175,815 1180,770 1175,740",
          "945,890 910,930 885,955 845,963 833,990",
          "885,955 910,960 910,1012 920,1010 940,1028 975,1010 1000,1020 1025,1020 1030,990 1040,975 1060,985 1065,940 1085,950 1105,930",
          "960,885 985,960 1005,1020 1018,1070 1032,1130 1048,1215 1060,1270 1070,1385",
          "1200,885 1205,910 1210,945 1190,960 1182,985 1195,1040",
          "1210,945 1222,1018 1255,1005 1290,990 1275,920 1260,850",
          "1290,990 1298,1050 1305,1088 1320,1090 1305,1160 1285,1240 1270,1290 1250,1300 1235,1305 1190,1240",
          "1305,1088 1318,1050 1310,1020 1335,1012 1395,1012",
          "1032,1130 1045,1132 1060,1095 1100,1035 1120,1010 1160,988 1175,1010 1190,1045 1175,1085 1165,1120 1172,1148 1155,1145 1170,1185 1195,1225 1190,1240",
          "1050,1215 1078,1195 1080,1170 1095,1162 1105,1182 1150,1155",
          "1310,1152 1340,1175 1370,1190 1398,1210 1370,1200 1355,1218 1295,1190",
          "1398,1210 1370,1290 1340,1385",
          "1070,1385 1130,1378 1190,1368 1265,1385 1340,1388",
          "1190,1240 1155,1290 1138,1320 1128,1322 1122,1382",
          "1250,1300 1265,1320 1265,1385",
          "840,1035 855,1045 862,1060 880,1130 895,1210 925,1375 940,1480",
          "840,1010 800,1010 745,1022 735,1035 712,1040 700,1058 690,1048 690,1090 665,1110 640,1115",
          "845,1068 810,1088 770,1098 740,1118 715,1160 685,1220",
          "775,1098 775,1140 780,1200 795,1250",
          "690,1210 720,1165 775,1135",
          "795,1250 825,1248 850,1245 855,1225 895,1220",
          "905,1235 905,1205 950,1180 952,1155 962,1168 1032,1130",
          "735,975 700,980 685,1000 660,1055 640,1090 630,1125 612,1165 615,1220 640,1250",
          "865,1060 895,1045 905,1015",
          "630,1135 640,1190 655,1225 645,1250",
          "635,1275 675,1268 712,1238 722,1255 745,1245 765,1275 810,1310 870,1345 925,1378",
          "802,1250 808,1310 822,1350 830,1420 818,1460 805,1460",
          "925,1378 940,1400 970,1415 1010,1425 1030,1405 1070,1392 1140,1410 1190,1450 1230,1505 1280,1568",
          "1340,1388 1320,1410 1312,1465 1300,1475 1325,1490 1322,1525 1305,1525 1250,1470 1235,1500",
          "500,940 500,965 540,950 535,905",
          "540,950 575,980 580,1015 600,1025 600,1065 630,1095",
          "490,965 495,1010 540,1065 615,1155",
          "445,930 485,912 492,960",
          "445,930 450,1030 460,1035",
          "330,972 380,968 400,972 425,1000 455,1035",
          "445,1045 470,1062 520,1125 560,1180 635,1275",
          "445,1045 450,1120 460,1248",
          "365,1060 370,1090 390,1075 388,1110 372,1140 395,1145 375,1175 395,1185 400,1245",
          "365,1060 385,1052 390,1030 400,1012 415,1035 445,1010",
          "480,1248 395,1248 330,1225 300,1212",
          "480,1248 485,1220 500,1215 535,1218 540,1262 562,1262 560,1180",
          "540,1262 538,1380",
          "640,1275 580,1335 515,1402 478,1395 475,1370 380,1345 330,1320",
          "300,1215 305,1265 330,1290 335,1320 300,1400 285,1440 270,1455 240,1435 215,1405 205,1345",
          "225,1210 278,1255 285,1230 295,1205",
          "250,1245 245,1285 225,1290 208,1325 205,1345",
          "218,1010 235,1030 240,1100 238,1150 225,1155 222,1210",
          "195,1128 235,1150",
          "288,990 285,1062 330,1068 345,1088 362,1080 365,1055 325,990",
          "285,1065 275,1115 285,1120 288,1165 300,1215",
          "330,1068 332,1220",
          "365,1248 370,1300 362,1350 365,1415 430,1408 440,1418 490,1418 515,1402",
          "365,1415 360,1490 375,1505 380,1550 418,1545 420,1500 515,1485 515,1440 500,1415",
          "523,1405 548,1450 555,1440 580,1490 600,1500 605,1530",
          "600,1500 640,1478 690,1435 718,1405 710,1395 690,1415 680,1410 680,1360 665,1310 640,1300 640,1280",
          "625,1295 630,1400 640,1475",
          "368,790 400,820 415,812 425,830 425,860",
          "425,860 500,755",
          "425,860 400,900 418,905 415,980",
          "285,1440 300,1460 315,1480 325,1540",
          "222,1458 240,1470 255,1462 275,1500 280,1568",
          "222,1458 190,1525 170,1568",
          "640,805 632,830 642,850 635,868",
          "645,1100 665,1105 660,1125 648,1112",
        ]}
      />
      <Piers list={["192,1090 175,1150", "160,1180 140,1235", "200,1370 180,1410 130,1465 105,1510", "310,975 325,1045"]} wide={10} />
      <Blots list={["85,1525 105,1520 100,1545 90,1545", "510,112 525,112 522,124 512,122", "640,205 660,195 662,208 645,214", "965,868 998,868 985,878 965,878", "815,395 828,410 825,425 818,420", "845,232 856,230 852,240", "1290,385 1304,400 1300,408 1292,400", "525,795 545,802 530,815"]} />
      <Islands
        list={[
          "460,305 460,325 440,365 418,430 398,480 385,520 368,540 385,485 405,430 430,360 445,320",
          "110,1115 145,1125 145,1160 120,1185 95,1215 80,1195 85,1170",
          "15,1040 35,1050 28,1065 22,1080 8,1078",
          "0,1140 10,1142 10,1162 0,1162",
          "755,175 770,155 768,215 755,222",
        ]}
      />
      <Blots list={["465,215 472,218 470,228 465,226", "352,566 358,568 356,574 352,572"]} />
    </Sheet>
  );
}

function Bronx() {
  return (
    <Sheet at="translate(2400 680) scale(0.5102 0.35714)">
      <Shore coast="300,1320 318,1270 335,1215 350,1180 368,1140 385,1100 380,1085 395,1050 410,1042 425,990 437,950 445,900 455,870 455,795 470,775 485,760 500,710 530,640 540,590 545,560 560,515 585,503 597,525 597,545 612,545 640,537 655,545 662,560 658,605 640,645 600,715 575,785 550,850 525,935 522,965 527,1030 527,1250 548,1300 556,1322" />
      <Borders
        list={[
          "538,590 560,615 575,655 582,690 575,710 585,725 588,760",
          "560,612 580,598 612,580 610,548",
          "612,548 630,560 650,555",
          "470,785 500,785 520,800 545,825 590,735",
          "545,825 525,880 518,920 515,960 495,1000 500,1030 480,1075 460,1118",
          "435,968 495,1015",
          "383,1098 400,1100 425,1118 445,1102 460,1118",
          "460,1118 440,1180 425,1225 460,1250 500,1280 515,1250 500,1225 508,1190 525,1155",
          "500,1268 480,1275 462,1285 465,1310 455,1345 440,1375",
          "390,1340 440,1378",
        ]}
      />
      <Shore coast="585,487 592,450 605,395 620,320 632,265 635,225 645,200 650,160 655,130 660,92 668,88 740,130 770,150 805,165 850,190 905,222 955,247 962,220 972,205 975,185 1010,178 1045,195 1048,210 1064,212 1070,250 1078,270 1078,318 1110,330 1140,350 1165,362 1172,350 1210,368 1260,392 1300,415 1341,440 1335,470 1325,495 1315,540 1300,580 1290,628 1272,600 1258,568 1280,590 1285,615 1292,565 1310,530 1325,545 1340,540 1340,490 1358,465 1368,485 1393,487 1393,520 1380,540 1400,560 1398,580 1360,585 1350,610 1345,650 1355,670 1335,728 1318,735 1308,750 1315,785 1300,820 1290,790 1280,770 1278,720 1270,675 1262,700 1245,680 1240,665 1218,650 1215,670 1228,690 1232,750 1208,762 1210,800 1215,825 1225,840 1215,865 1222,905 1210,940 1215,990 1228,1030 1222,1080 1262,1068 1270,1130 1300,1150 1320,1170 1290,1212 1275,1180 1268,1165 1275,1200 1300,1240 1340,1255 1360,1275 1358,1300 1340,1298 1300,1255 1262,1225 1240,1205 1200,1197 1160,1215 1130,1222 1120,1245 1118,1290 1100,1288 1085,1265 1070,1200 1072,1165 1075,1130 1062,1150 1050,1190 1035,1228 1020,1205 985,1192 1005,1200 1018,1220 1015,1250 1028,1280 1020,1298 975,1297 962,1280 958,1240 930,1230 912,1228 900,1200 895,1190 890,1220 910,1270 900,1310 880,1340 855,1325 812,1325 790,1290 750,1278 712,1300 690,1340 665,1380 645,1382 625,1360 600,1325 575,1322 560,1300 540,1255 535,1200 535,950 565,850 605,735 640,665 665,615 670,560 660,540 640,530 615,528 600,515" />
      <Borders
        list={[
          "743,130 740,190 745,240 743,345 735,375 727,400 740,410 800,430 835,440 852,395 855,450 870,468 895,470",
          "605,400 622,422 640,420 655,388 672,373 685,395 708,378 743,350",
          "905,225 890,250 865,270 858,305 900,295 950,308 985,335 1035,365 1035,388 1095,375 1092,325",
          "1035,388 1018,430 1000,480 1008,520 995,545 975,535 975,568 897,568",
          "945,310 935,370 925,430 905,490 898,520",
          "740,410 715,455 700,490 690,550 700,585 725,605 732,590 757,625 775,590 790,560 788,530 805,480 800,430",
          "805,470 818,520 830,605 860,580 885,520 895,470",
          "897,500 895,720 905,715 975,712 970,650 948,625 948,568",
          "830,605 790,640 770,675 775,720 785,780 820,815 855,865 870,890",
          "830,605 820,640 838,700 835,750 825,810",
          "975,535 1010,555 1060,600 1100,640 1140,685 1150,697 1180,685 1212,630 1180,595 1172,550 1187,410 1168,390 1110,425 1055,485 1080,510 1090,580 1110,610 1120,640 1140,685",
          "1187,410 1230,400 1280,405 1341,440",
          "975,712 1050,710 1090,720 1140,685",
          "905,715 905,785 935,795 945,815 985,788 1005,805 1045,785 1047,820 1065,765 1100,730 1140,690",
          "1130,705 1115,740 1098,760 1092,870 1115,872 1150,855 1142,745 1115,740",
          "1155,840 1157,970 1210,955",
          "1155,850 1175,822 1210,820",
          "1092,870 1085,905 1072,905",
          "1062,1033 1095,1035 1097,1070 1095,1165 1075,1165",
          "880,915 925,900 990,883 1020,890 1045,925 1072,905",
          "905,785 910,860 885,885 880,935 840,980 818,1040",
          "870,890 885,885",
          "935,900 940,985 1000,975 998,885",
          "818,1040 870,1028 940,985 970,985 980,1055 985,1097 1055,1085 1055,1040",
          "808,1045 800,1095 820,1092 895,1075 980,1055",
          "820,1092 835,1140 860,1165 890,1190 930,1205 958,1240",
          "893,1078 900,1180",
          "835,1138 885,1130 882,1080",
          "743,875 790,915 810,910 830,935 835,910 880,912",
          "743,875 765,845 750,810 760,760 775,680",
          "718,960 743,970 765,945 800,925",
          "743,970 745,1015 790,1020 808,1045",
          "757,1058 808,1048",
          "720,1045 752,1040 755,1115 765,1118 745,1165 750,1190 708,1235 712,1300",
          "720,1045 712,1118 700,1215",
          "700,1215 640,1180 620,1188 600,1170 572,1170 575,1150 630,1080 640,1095 712,1120",
          "630,1090 635,1070 655,1078 658,1045 670,1018 695,1022 720,950 743,875",
          "545,1200 555,1195 565,1150 590,1050 615,970 650,905 655,880 695,880 697,860 718,858 750,745",
          "560,858 625,858 625,900 590,960 570,1030 535,1040",
          "645,855 665,790 690,740 720,750 748,745",
          "645,855 655,880",
          "690,740 690,700 665,715 650,690",
          "695,700 720,655 740,605",
          "722,660 740,665 735,700 752,712 770,680",
          "632,530 655,485 680,495 685,545 700,560",
          "668,885 670,940 685,950 695,885",
          "670,1018 680,960",
        ]}
      />
      <path d="M1072,905 L1078,980 L1058,1030 L1065,1075 L1080,1110 L1078,1150" stroke={EDGE} strokeWidth="4" vectorEffect="non-scaling-stroke" />
      <Piers list={["640,665 672,665", "655,695 670,680"]} wide={8} />
      <Blots list={["618,852 645,852 640,866 625,870", "680,925 690,930 682,955", "1215,835 1238,840 1225,870", "1378,535 1395,548 1398,572 1385,560", "955,1245 968,1260 968,1285 960,1275"]} />
      <Islands
        list={[
          "985,165 1005,142 1000,170 990,178",
          "1348,712 1368,710 1370,760 1395,790 1412,830 1412,880 1405,940 1388,935 1370,880 1352,830 1345,770",
          "1465,690 1480,692 1500,745 1485,770 1480,820 1490,855 1478,845 1468,790",
          "1265,882 1290,885 1288,898 1270,898",
          "1380,690 1395,685 1392,702 1380,700",
          "1460,562 1475,570 1470,575",
          "1448,670 1460,675 1450,680",
          "570,1320 600,1340 642,1382 645,1415 610,1480 590,1540 570,1550 520,1525 515,1500 530,1455 570,1440 562,1400",
          "795,1363 830,1402 860,1415 892,1455 890,1500 800,1497 785,1470 768,1440 770,1375",
          "732,1318 746,1337 730,1356 724,1335",
          "732,1380 744,1380 742,1391 732,1390",
        ]}
      />
      <Blots list={["1345,745 1360,760 1358,785 1345,780", "1400,860 1416,865 1410,910 1402,900", "1390,465 1398,465 1398,473 1390,473", "1448,528 1455,530 1452,540 1448,538", "1475,628 1482,630 1478,637", "1490,608 1495,612 1492,620", "1393,656 1402,660 1400,668 1393,666", "1398,738 1406,740 1404,748", "1412,740 1418,742 1414,748", "1365,960 1370,962 1368,972"]} />
      <path d="M367,1148 L424,1228 L405,1250 L388,1272 L378,1370 L304,1312 Z" fill="#b8c0ee" stroke="#00ffff" strokeWidth="6" vectorEffect="non-scaling-stroke" />
    </Sheet>
  );
}

function SouthWest() {
  return (
    <Sheet at="translate(1850 1700) scale(0.63776 0.33333)">
      <Shore coast="27,906 28,830 48,785 62,740 50,680 38,630 38,580 44,520 42,400 45,350 60,325 72,300 80,265 110,205 122,195 125,220 145,190 150,222 168,188 180,225 205,228 222,245 235,272 265,285 290,268 310,258 330,235 350,230 375,240 400,245 430,230 455,190 495,183 520,193 548,180 578,148 610,155 630,180 640,215 638,290 642,350 640,430 660,480 682,520 700,580 715,630 730,650 733,725 700,800 680,850 665,890 652,906" />
      <Piers list={["118,200 145,205", "180,232 215,240 235,270 290,272", "380,240 440,225"]} wide={8} />
      <Blots list={["638,190 648,200 650,240 640,245", "640,362 662,378 660,388 642,372"]} />
      <Islands list={["228,200 245,208 240,228 230,225"]} />
      <Borders
        list={[
          "72,312 125,390 165,460 210,480 240,520 270,590 310,625 390,620 440,585 460,597 545,597 590,640 635,650 680,692 682,665 715,632",
          "305,260 295,370 302,400 298,450 270,520 265,578",
          "388,250 375,290 380,310 370,350 368,410 412,395 430,425 450,445 485,490 500,525 522,595",
          "432,275 438,400 450,440",
          "432,275 455,275 518,250 540,262 548,302 580,292 610,272 638,278",
          "580,295 560,400 530,465 500,520",
          "580,320 605,380 585,405 575,500 572,540 577,560 600,510 642,460",
          "648,480 625,560 602,640",
          "370,358 345,385 340,440 332,520 298,520 297,600 285,605",
          "415,610 435,615 440,690 420,700 400,740 370,732 350,790 335,848 285,848 230,770 200,845 192,906",
          "552,615 548,700 550,740 512,790 505,850 480,906",
          "550,710 575,700 597,693 598,735 580,760 600,808 650,758 660,810 678,850",
          "488,880 502,906",
        ]}
      />
      <Shore coast="864,145 862,170 850,180 838,205 820,205 808,230 808,265 795,330 787,380 783,440 788,540 805,590 815,630 835,660 880,675 930,710 955,745 972,790 985,835 980,870 978,906" seam="L1352,906 L1352,145" />
      <Borders
        list={[
          "1070,0 1100,40 1112,150 1118,200 1125,280 1118,320 1088,352",
          "965,100 1000,25 1020,38 1045,30 1065,75 1070,165 1082,190 1105,190 1112,155 1140,120 1140,95 1160,75 1155,0",
          "965,100 940,170 905,260 912,275 900,300",
          "970,100 1065,235 1070,220 1075,300 1088,302 1088,352 1085,410 1090,540",
          "1070,165 1040,185 1000,250 985,235 955,290 945,345",
          "1160,75 1172,130 1210,128 1212,68 1310,58 1315,0",
          "1225,70 1225,210 1220,268 1192,268 1178,220 1172,130",
          "1300,60 1305,180 1310,255 1325,250 1325,225 1335,225 1340,255 1350,225",
          "1240,142 1262,142 1270,152 1290,150 1290,195 1245,195 1240,142",
          "1192,268 1230,268 1235,345 1270,345 1275,312 1318,308 1322,250",
          "1112,410 1112,380 1160,370 1168,392 1225,382 1235,345",
          "1085,410 1112,410 1125,450 1142,460 1152,600 1100,615 1090,540",
          "1225,382 1230,450 1238,480 1238,540 1210,590 1152,600",
          "945,345 990,405 1095,560 1100,615",
          "900,300 905,335 935,370 948,340",
          "820,205 865,272 878,240 885,280 900,300",
          "905,340 890,450 870,500 852,570 858,605 870,610 885,680",
          "990,405 990,440 940,540 925,565 898,640 890,680",
          "880,500 925,565 970,610 970,630 955,660 1000,715 990,760 980,800",
          "880,500 870,550 862,600",
          "1072,540 1035,640 1035,660 1010,750 985,800",
          "1100,615 1108,750 1112,825 1160,820 1162,906",
          "1108,755 1075,762 1070,790 1045,790 985,870",
          "1170,600 1178,755 1240,740 1245,712 1285,705",
          "1180,755 1178,865 1165,870",
          "1138,830 1135,906",
          "1238,540 1240,512 1255,510 1272,485 1320,560 1325,548 1355,548 1365,530 1358,350 1355,190 1400,120 1385,60 1350,0",
          "1238,540 1245,610 1262,600 1280,615 1300,650 1355,635",
          "1265,620 1300,690 1330,810 1365,880",
          "1015,906 1025,898 1050,900",
          "1090,530 1105,525 1105,560 1092,560",
        ]}
      />
      <Piers list={["905,15 890,80 865,125", "985,830 985,880"]} wide={11} />
      <Blots list={["858,95 880,105 875,128 858,125"]} />
    </Sheet>
  );
}

function JamaicaBay() {
  return (
    <Sheet at="translate(2700 1650) scale(0.40816 0.33333)">
      <path d="M0,290 H1335 V320 H0Z" fill={LAND} />
      <path d="M490,268 L540,268 L518,320 L560,352 L640,340 L700,305 L740,305 L965,465 L1285,430 L1400,296 L1460,330 L1400,1056 L300,1056 L480,360Z" fill="#fff" />
      <Shore
        coast="1443,250 1400,278 1365,290 1328,312 1322,420 1335,445 1318,458 1305,412 1285,432 1270,460 1190,500 1145,535 1130,590 1120,635 1140,700 1090,682 1118,630 1105,600 1090,570 1070,545 1045,555 1025,600 1005,640 1010,680 1042,700 1000,745 965,770 935,735 900,725 915,670 940,605 985,605 1005,575 1020,520 985,475 965,465 935,440 890,410 830,370 770,330 740,292 705,300 690,290 670,310 640,308 640,338 600,342 570,350 540,350 518,322 530,270 490,275 475,310 480,360 440,375 410,405 395,430 365,440 345,430 320,415 340,450 295,500 290,540 275,535 245,560 230,595 210,602 180,595 130,550 45,495 60,515 130,570 170,610 200,615 203,690 225,705 232,735 245,740 230,790 200,803 165,803 130,795 110,810 75,830 50,800 45,750 68,695"
        seam="L40,840 L-5,840 L-5,240"
      />
      <Shore coast="75,840 110,845 180,830 235,828 265,805 295,805 310,920 330,1000 340,1056" seam="L190,1056 L180,1010 L130,1015 L95,1030 L85,1056 L-5,1056 L-5,780 L40,780" />
      <path d="M75,842 L95,836 L235,815 L262,800 L240,785 L200,806 L110,812 L75,832 L60,815 L45,800 Z" fill="#fff" />
      <Borders
        list={[
          "30,345 105,268 145,320 200,262 190,238 220,228 242,268",
          "0,130 25,165 35,150 75,215 100,218 105,268 118,230 180,195 300,115 290,98 260,125 245,120",
          "150,0 165,110 180,195",
          "242,268 300,230 330,290 358,335 335,410",
          "30,345 40,490 50,685 25,698 0,690",
          "85,1056 90,1030 130,1015 180,1010 190,1056",
          "60,690 68,740 50,780 70,828",
          "0,855 40,858 75,900 85,960 85,1022",
          "10,880 40,870 60,900 78,960",
          "10,880 20,920 60,990",
          "0,965 40,1015 0,1030",
          "0,400 25,370",
          "965,465 940,480 915,505",
        ]}
      />
      <Creeks list={["245,300 270,345 300,375 330,418", "322,232 345,300 370,350 405,405", "110,672 150,730 165,760 165,800", "45,500 130,562 190,606"]} wide={6} core={2} />
      <Creeks list={["615,142 622,210 635,305", "728,300 722,220 732,175 765,152 815,160", "1228,305 1265,345 1288,385 1285,430", "450,178 450,215 480,262"]} wide={7} core={3} />
      <path d="M662,190 L670,250 L690,290 M685,190 L690,230 L708,295 M665,210 H690 M240,290 L260,335 M450,180 L465,180 L460,225 L485,270" stroke={EDGE} strokeWidth="4" vectorEffect="non-scaling-stroke" />
      <Shore coast="1120,635 1135,625 1140,695 1150,705 1155,725 1190,748 1235,742 1285,722 1298,735 1310,780 1350,828 1350,925 1290,935 1250,970 1220,970 1160,965 1000,990 900,1035 825,1056" seam="L760,1010 L860,890 L1090,880 L1088,705 L1095,685" />
      <path d="M1100,762 L1120,760 L1112,880 L1140,905 L1095,890 L1082,850 L1048,900 L1030,880 L1085,765 Z" fill="#fff" />
      <path d="M860,880 L950,865 L1000,828 L1045,755 L1085,750 L1088,700 L1000,700 L830,850 L760,1005 L830,945 Z" fill="#fff" />
      <Islands list={["970,920 965,890 1000,828 1018,828 1020,800 1048,758 1085,760 1080,845 1055,862 1035,862 1035,890 1010,905"]} />
      <Borders
        list={[
          "1085,750 1088,705 1150,708",
          "1088,735 1120,760 1115,885 1140,890 1138,905",
          "1080,850 1092,888 1115,888",
          "1000,830 985,860 910,878 880,882 862,900 868,930 835,945 800,975 765,1005 720,1015 690,1045 670,1056",
          "770,1010 780,1056",
          "1145,880 1160,860 1175,885 1168,900 1165,962",
          "1105,590 1085,640",
        ]}
      />
      <path d="M690,1045 L720,1015 L765,1005 L785,1056 L670,1056 Z" fill={LAND} />
      <Islands
        list={[
          "655,410 690,440 722,445 725,398 735,450 745,510 770,545 785,620 772,680 785,695 792,770 765,860 750,925 665,930 650,910 720,885 735,820 745,740 720,710 680,695 630,690 645,640 645,600 672,570 670,480",
          "330,620 370,580 420,542 430,570 418,600 430,640 415,660 345,685 320,675",
          "475,505 480,485 515,470 520,510 480,518",
          "540,490 545,440 555,415 575,435 545,495",
          "478,530 510,545 540,535 545,518 555,525 540,580 478,580",
          "485,612 500,615 520,592 545,600 535,622 500,635 485,635",
          "440,850 455,838 510,845 530,880 500,910 470,915 440,885",
          "385,1056 388,1005 400,980 422,962 450,985 455,1056",
          "580,940 615,910 660,950 660,985 640,992 620,960 590,948",
          "770,505 790,498 805,520 808,570 825,670 815,672 800,600 782,550",
          "845,600 870,565 905,542 940,570 912,592 895,640 880,710 862,705 860,660 848,640",
          "790,818 815,820 828,850 820,890 795,860",
          "640,775 665,752 685,775 675,800 650,805",
          "565,705 585,708 605,730 635,718 625,770 600,800 575,820 545,795 565,770",
          "870,790 905,760 932,780 930,812 880,815",
          "490,742 510,750 535,725 540,755 505,782",
          "370,745 380,745 395,795 385,795",
          "695,750 700,750 710,790 695,798",
        ]}
      />
      <path d="M730,710 L742,690 L785,690" stroke={EDGE} strokeWidth="2" vectorEffect="non-scaling-stroke" />
      <path d="M780,700 L790,700 M385,800 L392,905" stroke={EDGE} strokeWidth="3" vectorEffect="non-scaling-stroke" />
      <Blots
        list={[
          "655,590 685,580 685,600 650,640 640,690 625,688 645,640",
          "545,785 570,795 600,795 605,815 570,825 545,800",
          "870,792 900,785 930,800 930,815 880,818",
          "590,550 602,540 615,552 602,568",
          "432,585 445,582 450,595 435,598",
          "842,925 850,918 880,935 875,970 845,945",
          "1320,900 1350,893 1350,912 1330,910",
          "1280,415 1320,410 1300,430 1280,440",
          "735,740 755,740 750,770 738,765",
          "815,950 830,940 830,955 820,965",
          "565,570 585,592 570,598",
          "965,710 1000,700 975,750 965,770",
          "998,625 1008,640 1005,695 998,690",
          "960,895 978,900 978,925 962,925",
          "1110,882 1140,885 1138,908 1130,892",
          "400,768 412,770 402,782",
          "525,728 542,722 542,750 530,750",
          "780,695 798,700 790,720",
          "102,660 122,670 120,690 106,688",
        ]}
      />
    </Sheet>
  );
}

function MapView() {
  return (
    <svg viewBox="413 204 3344 1798" preserveAspectRatio="xMinYMin slice" className="absolute inset-0 size-full" fill="none" shapeRendering="crispEdges" role="img" aria-label="Map of New York City districts">
      <Queens />
      <SouthWest />
      <JamaicaBay />
      <Bronx />
    </svg>
  );
}

/* ------------------------------------------------------------------ */
/* Frame                                                               */
/* ------------------------------------------------------------------ */

function Chevron({ d, label, className }: { d: string; label: string; className: string }) {
  return (
    <button type="button" aria-label={label} className={`flex shrink-0 items-center justify-center ${className}`}>
      <svg viewBox="0 0 16 16" className="size-4" fill="none" aria-hidden="true">
        <path d={d} stroke="#5c5c5c" strokeWidth="4" />
      </svg>
    </button>
  );
}

function DataFrame() {
  return (
    <main className="ml-[9px] flex min-w-0 grow flex-col">
      <div className="flex min-h-0 grow">
        <div className="relative min-w-0 grow overflow-hidden border-4 border-t-[#696969] border-r-white border-b-white border-l-[#696969] bg-white outline-2 -outline-offset-2 outline-[#a0a0a0]">
          <MapView />
        </div>
        <div className="flex w-8 shrink-0 flex-col border-t-4 border-r-2 border-t-[#696969] border-r-[#dedede] bg-[#f0f0f0]">
          <Chevron d="M2,12 L8,5 L14,12" label="Scroll up" className="h-[34px]" />
          <span className="grow-[1398] basis-0 bg-[#cdcdcd]" />
          <span className="grow-[332] basis-0" />
          <Chevron d="M2,4 L8,11 L14,4" label="Scroll down" className="h-[34px]" />
        </div>
      </div>
      <div className="flex h-8 shrink-0 border-b-2 border-l-4 border-b-[#dedede] border-l-[#696969] bg-[#f0f0f0]">
        <button type="button" aria-label="Data View" className="flex h-[22px] w-[29px] items-center justify-center border-2 border-t-0 border-[#99c9ef] bg-[#cce4f7]">
          <svg viewBox="0 0 16 16" className="size-4" aria-hidden="true">
            <rect x="1" y="1" width="14" height="14" fill="#b9dc74" stroke="#222" strokeWidth="2" />
            <path d="M10,2 L6,9 L12,14 H14 V2Z" fill="#e3f1fa" />
            <path d="M10,2 L6,14" stroke="#5c8a2c" />
          </svg>
        </button>
        <button type="button" aria-label="Layout View" className="flex h-5 w-[29px] items-center justify-center">
          <svg viewBox="0 0 16 16" className="size-4" fill="none" aria-hidden="true">
            <path d="M2,1 H10 L14,5 V15 H2 Z" fill="#fff" stroke="#222" strokeWidth="2" />
            <path d="M5,7 h6 v3 h-6z M4,12 h5" stroke="#2f6aa8" strokeWidth="1.5" />
          </svg>
        </button>
        <span className="mx-1.5 h-5 w-0.5 bg-[#8a8a8a]" />
        <button type="button" aria-label="Refresh" className="flex h-5 w-9 items-center justify-center">
          <svg viewBox="0 0 16 16" className="size-4" fill="none" aria-hidden="true">
            <path d="M2,7 A6,6 0 0 1 13,4 M14,9 A6,6 0 0 1 3,12" stroke="#0d4f9a" strokeWidth="2" />
            <path d="M10,5 h6 v-5z M6,11 h-6 v5z" fill="#0d4f9a" />
          </svg>
        </button>
        <button type="button" aria-label="Pause Drawing" className="flex h-5 w-6 items-center justify-center gap-1">
          <span className="h-3 w-1 bg-[#1c55a8]" />
          <span className="h-3 w-1 bg-[#1c55a8]" />
        </button>
        <span className="w-3" />
        <Chevron d="M11,2 L5,8 L11,14" label="Scroll left" className="h-6 w-10" />
        <span className="h-7 grow bg-[#cdcdcd]" />
        <Chevron d="M5,2 L11,8 L5,14" label="Scroll right" className="h-6 w-10" />
        <span className="w-8" />
      </div>
      <div className="h-0.5 shrink-0 bg-white" />
    </main>
  );
}

function DockTab({ icon, label, className }: { icon: string; label: string; className: string }) {
  return (
    <button type="button" className={`flex w-full flex-col items-center gap-1.5 rounded-l-md border-2 border-r-0 border-[#9a9a9a] bg-[#f0f0f0] pt-2 ${className}`}>
      <Icon>{icons[icon]}</Icon>
      <span className="text-[24px] leading-8 text-[#6d6d6d] [writing-mode:vertical-rl]">{label}</span>
    </button>
  );
}

function WinButton({ label, d }: { label: string; d: string }) {
  return (
    <button type="button" aria-label={label} className="flex w-[92px] items-center justify-center">
      <svg viewBox="0 0 20 20" className="size-5" fill="none" aria-hidden="true">
        <path d={d} stroke="#000" strokeWidth="2" />
      </svg>
    </button>
  );
}

const menus = ["File", "Edit", "View", "Bookmarks", "Insert", "Selection", "Geoprocessing", "Customize", "Windows", "Help"];

export default function App() {
  return (
    <div className="relative flex h-screen flex-col overflow-hidden bg-linear-to-r from-[#f0f0f0] to-[#fbfbfb] font-['Open_Sans','Noto_Sans',sans-serif] text-[23px] leading-8 text-black">
      <header className="flex h-[46px] shrink-0 bg-white">
        <div className="flex grow items-center gap-1.5 pl-0.5">
          <Icon>{icons.app}</Icon>
          <h1>Untitled - ArcMap</h1>
        </div>
        <div className="mr-1 flex">
          <WinButton label="Minimize" d="M0,10 H20" />
          <WinButton label="Restore" d="M1,5 H15 V19 H1 Z M5,5 V1 H19 V15 H15" />
          <WinButton label="Close" d="M1,1 L19,19 M19,1 L1,19" />
        </div>
      </header>
      <nav className="flex h-[52px] shrink-0 items-center gap-[31px] pb-1 pl-6">
        {menus.map((m) => (
          <button key={m} type="button">
            {m}
          </button>
        ))}
      </nav>
      <div className="flex shrink-0 flex-col gap-1 pb-0.5">
        <StandardBar />
        <ToolsBar />
      </div>
      <div className="flex min-h-0 grow">
        <Contents />
        <DataFrame />
        <aside className="ml-1.5 w-10 shrink-0 pt-1">
          <DockTab icon="catalog" label="Catalog" className="h-[142px]" />
          <DockTab icon="search" label="Search" className="h-[136px]" />
        </aside>
      </div>
      <footer className="flex h-10 shrink-0 items-center border-t-2 border-[#e8e8e8] bg-[#f0f0f0]">
        <span className="grow" />
        <span className="h-9 w-10 border-x-2 border-[#e6e6e6]" />
        <span className="w-[516px] pl-2.5 text-[22px] whitespace-pre">-74.694  40.703 Decimal Degrees</span>
      </footer>
      <ContextMenu />
    </div>
  );
}
